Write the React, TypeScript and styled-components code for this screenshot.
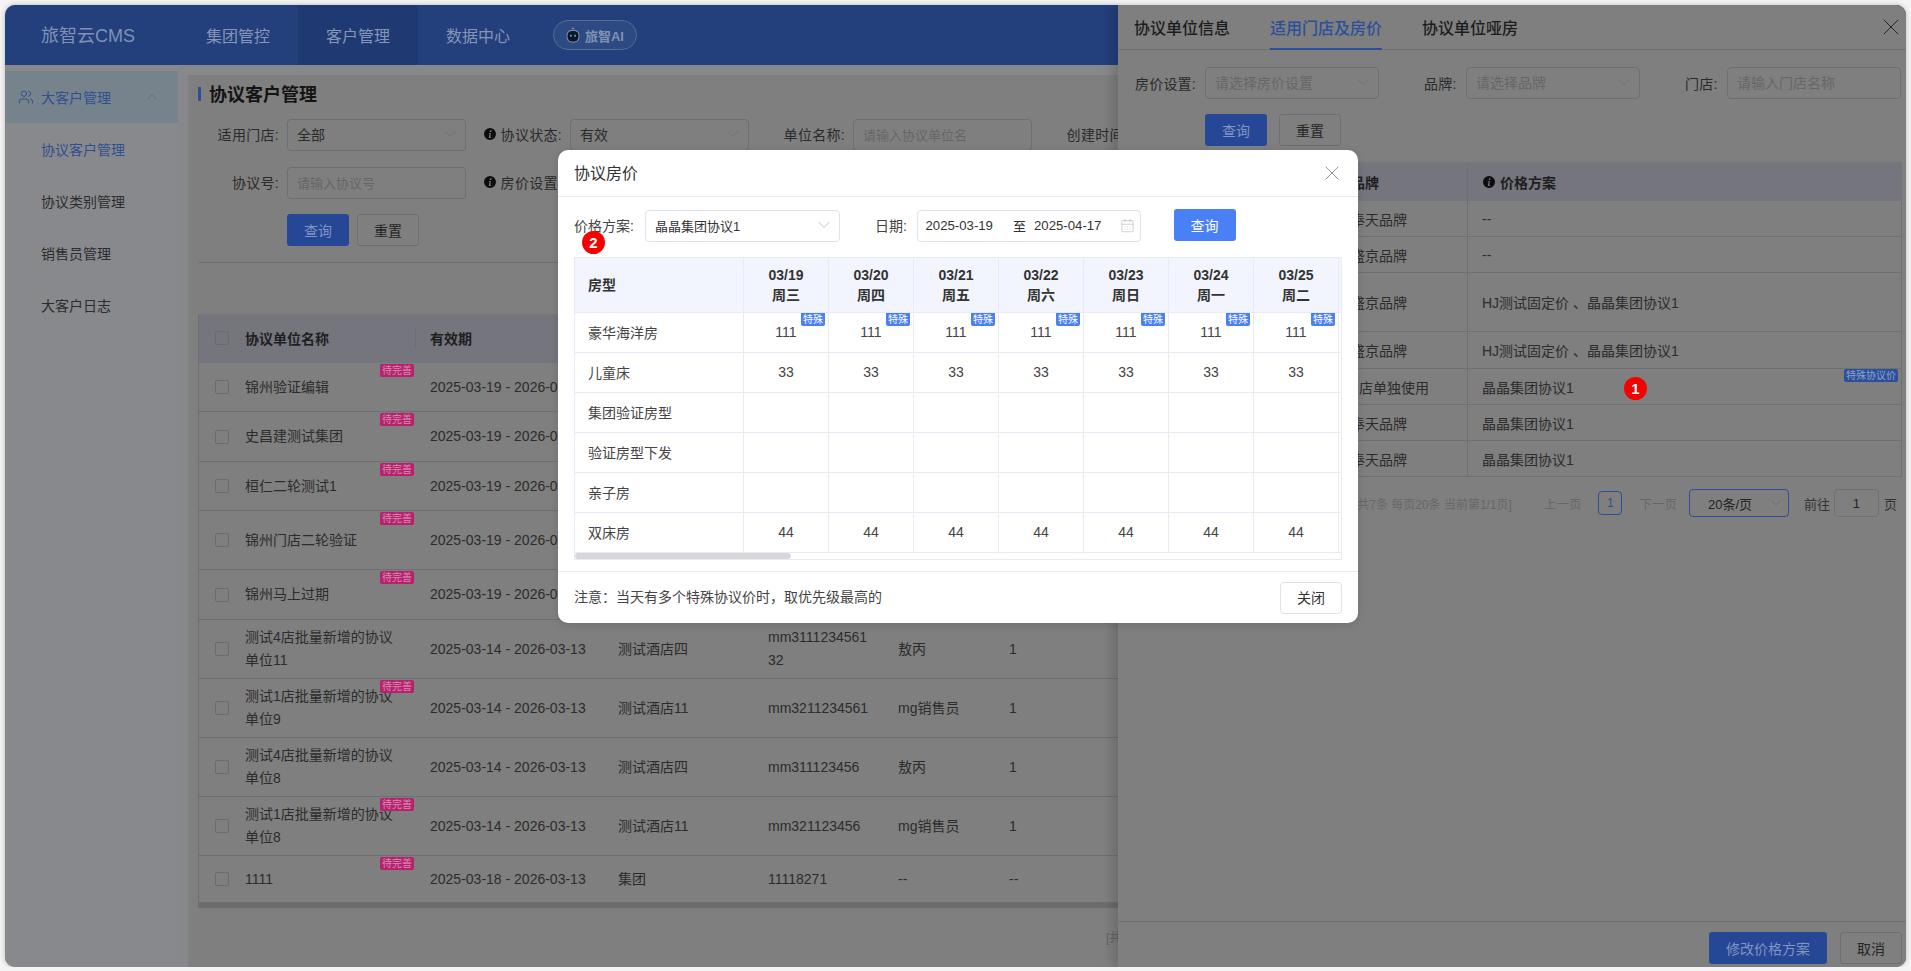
import React from 'react'
import styled, { createGlobalStyle } from 'styled-components'
import { CalendarDays, ChevronDown, ChevronUp, Users, X } from 'lucide-react'

const GlobalStyle = createGlobalStyle`
  html, body {
    margin: 0;
    background: #f4f4f4;
    font-family: "Liberation Sans", "Noto Sans CJK SC", sans-serif;
    font-size: 14px;
    color: #333;
  }
  * {
    box-sizing: border-box;
  }
`

const infoPath = 'M6 0a6 6 0 1 1 0 12A6 6 0 0 1 6 0zm.7 2.2a1 1 0 0 0-1 1 .8.8 0 0 0 .9.8 1 1 0 0 0 1-1 .8.8 0 0 0-.9-.8zM6.9 5 4.9 5.300l-.1.4.5.1c.3.100.3.200.3.400l-.7 2.700c-.2.800.1 1.200.8 1.200.6 0 1.100-.3 1.500-.7l.1-.4c-.2.200-.5.300-.7.300-.3 0-.3-.2-.3-.4z'

const InfoIcon = () => (
  <svg width="12" height="12" viewBox="0 0 12 12" style={{ flexShrink: 0 }}>
    <path d={infoPath} fill="#0d0d0d" fillRule="evenodd" />
  </svg>
)

const RobotIcon = () => (
  <svg width="14" height="16" viewBox="0 0 14 16">
    <circle cx="7" cy="1.6" r="1" fill="#7f8fae" />
    <rect x="0.600" y="3" width="12.800" height="12.400" rx="5" fill="#7f8fae" />
    <rect x="1.600" y="4" width="10.800" height="10.400" rx="4.200" fill="#0d1522" />
    <rect x="4" y="7.500" width="1.800" height="2.400" rx="0.900" fill="#3f9fc0" />
    <rect x="8.200" y="7.500" width="1.800" height="2.400" rx="0.900" fill="#3f9fc0" />
  </svg>
)

interface CustomerRow {
  name: string
  period: string
  hotel: string
  code: string
  sales: string
  count: string
  pending: boolean
  height: number
}

// the right hand cells of these rows sit behind the modal
const covered = { hotel: '', code: '', sales: '', count: '', period: '2025-03-19 - 2026-03-13' }

const customers: CustomerRow[] = [
  { ...covered, name: '锦州验证编辑', pending: true, height: 49 },
  { ...covered, name: '史昌建测试集团', pending: true, height: 50 },
  { ...covered, name: '桓仁二轮测试1', pending: true, height: 49 },
  { ...covered, name: '锦州门店二轮验证', pending: true, height: 59 },
  { ...covered, name: '锦州马上过期', pending: true, height: 50 },
  { name: '测试4店批量新增的协议单位11', period: '2025-03-14 - 2026-03-13', hotel: '测试酒店四', code: 'mm311123456132', sales: '敖丙', count: '1', pending: false, height: 59 },
  { name: '测试1店批量新增的协议单位9', period: '2025-03-14 - 2026-03-13', hotel: '测试酒店11', code: 'mm3211234561', sales: 'mg销售员', count: '1', pending: true, height: 59 },
  { name: '测试4店批量新增的协议单位8', period: '2025-03-14 - 2026-03-13', hotel: '测试酒店四', code: 'mm311123456', sales: '敖丙', count: '1', pending: false, height: 59 },
  { name: '测试1店批量新增的协议单位8', period: '2025-03-14 - 2026-03-13', hotel: '测试酒店11', code: 'mm321123456', sales: 'mg销售员', count: '1', pending: true, height: 59 },
  { name: '1111', period: '2025-03-18 - 2026-03-13', hotel: '集团', code: '11118271', sales: '--', count: '--', pending: true, height: 47 }
]

const storeRows = [
  { brand: '奉天品牌', plan: '--', height: 36 },
  { brand: '盛京品牌', plan: '--', height: 36 },
  { brand: '盛京品牌', plan: 'HJ测试固定价 、晶晶集团协议1', height: 59 },
  { brand: '盛京品牌', plan: 'HJ测试固定价 、晶晶集团协议1', height: 37 },
  { brand: '门店单独使用', plan: '晶晶集团协议1', height: 36, special: true },
  { brand: '奉天品牌', plan: '晶晶集团协议1', height: 36 },
  { brand: '奉天品牌', plan: '晶晶集团协议1', height: 36 }
]

const days = [
  ['03/19', '周三'],
  ['03/20', '周四'],
  ['03/21', '周五'],
  ['03/22', '周六'],
  ['03/23', '周日'],
  ['03/24', '周一'],
  ['03/25', '周二']
]

const roomRows = [
  { room: '豪华海洋房', price: '111', special: true },
  { room: '儿童床', price: '33' },
  { room: '集团验证房型', price: '' },
  { room: '验证房型下发', price: '' },
  { room: '亲子房', price: '' },
  { room: '双床房', price: '44' }
]

const App: React.FC = () => {
  return (
    <>
      <GlobalStyle />
      <AppWindow>
        <TopBar>
          <Logo>旅智云CMS</Logo>
          <NavItem>集团管控</NavItem>
          <NavItem $active>客户管理</NavItem>
          <NavItem>数据中心</NavItem>
          <AiPill>
            <RobotIcon />
            旅智AI
          </AiPill>
        </TopBar>
        <Body>
          <Sidebar>
            <SideGroup>
              <Users size={16} strokeWidth={1.5} />
              <span>大客户管理</span>
              <ChevronUp size={18} strokeWidth={1} />
            </SideGroup>
            <SideItem $active>协议客户管理</SideItem>
            <SideItem>协议类别管理</SideItem>
            <SideItem>销售员管理</SideItem>
            <SideItem>大客户日志</SideItem>
          </Sidebar>
          <Card>
            <PageTitle>协议客户管理</PageTitle>
            <FilterRow>
              <FilterItem>
                <FilterLabel>适用门店:</FilterLabel>
                <SelectBox>
                  全部
                  <ChevronDown size={20} strokeWidth={0.9} />
                </SelectBox>
              </FilterItem>
              <FilterItem>
                <FilterLabel $narrow>
                  <InfoIcon />
                  协议状态:
                </FilterLabel>
                <SelectBox>
                  有效
                  <ChevronDown size={20} strokeWidth={0.9} />
                </SelectBox>
              </FilterItem>
              <FilterItem>
                <FilterLabel $narrow>单位名称:</FilterLabel>
                <TextInput placeholder="请输入协议单位名" />
              </FilterItem>
              <FilterItem>
                <FilterLabel $narrow>创建时间:</FilterLabel>
                <TextInput />
              </FilterItem>
            </FilterRow>
            <FilterRow>
              <FilterItem>
                <FilterLabel>协议号:</FilterLabel>
                <TextInput placeholder="请输入协议号" />
              </FilterItem>
              <FilterItem>
                <FilterLabel $narrow>
                  <InfoIcon />
                  房价设置:
                </FilterLabel>
                <SelectBox />
              </FilterItem>
            </FilterRow>
            <ButtonRow>
              <PrimaryButton>查询</PrimaryButton>
              <GhostButton>重置</GhostButton>
            </ButtonRow>
            <Divider />
            <CustomerTable>
              <CustomerHead>
                <CheckBox />
                <HeadName>协议单位名称</HeadName>
                <span>有效期</span>
              </CustomerHead>
              {customers.map(row => (
                <CustomerLine key={row.name + row.height} $height={row.height}>
                  <CheckBox />
                  <NameCell>{row.name}</NameCell>
                  <span>{row.period}</span>
                  <span>{row.hotel}</span>
                  <CodeCell>{row.code}</CodeCell>
                  <span>{row.sales}</span>
                  <span>{row.count}</span>
                  {row.pending && <PendingTag>待完善</PendingTag>}
                </CustomerLine>
              ))}
              <TableScroll />
            </CustomerTable>
            <TotalLine>[共10条 每页20条 当前第1/1页]</TotalLine>
          </Card>
        </Body>

        <Drawer>
          <DrawerTabs>
            <DrawerTab>协议单位信息</DrawerTab>
            <DrawerTab $active>适用门店及房价</DrawerTab>
            <DrawerTab>协议单位哑房</DrawerTab>
            <DrawerClose>
              <X size={28} strokeWidth={0.85} />
            </DrawerClose>
          </DrawerTabs>
          <DrawerFilters>
            <DrawerField $labelWidth={62}>
              房价设置:
              <DrawerSelect>
                请选择房价设置
                <ChevronDown size={20} strokeWidth={0.9} />
              </DrawerSelect>
            </DrawerField>
            <DrawerField $labelWidth={34}>
              品牌:
              <DrawerSelect>
                请选择品牌
                <ChevronDown size={20} strokeWidth={0.9} />
              </DrawerSelect>
            </DrawerField>
            <DrawerField $labelWidth={34}>
              门店:
              <DrawerInput placeholder="请输入门店名称" />
            </DrawerField>
          </DrawerFilters>
          <DrawerButtons>
            <PrimaryButton>查询</PrimaryButton>
            <GhostButton>重置</GhostButton>
          </DrawerButtons>
          <StoreTable>
            <StoreHead>
              <span />
              <BrandCell>品牌</BrandCell>
              <PlanHead>
                <InfoIcon />
                价格方案
              </PlanHead>
            </StoreHead>
            {storeRows.map((row, i) => (
              <StoreLine key={i} $height={row.height}>
                <span />
                <BrandCell $shift={row.special}>{row.brand}</BrandCell>
                <PlanCell>{row.plan}</PlanCell>
                {row.special && <SpecialPlanTag>特殊协议价</SpecialPlanTag>}
              </StoreLine>
            ))}
          </StoreTable>
          <Pager>
            <PagerTotal>[共7条 每页20条 当前第1/1页]</PagerTotal>
            <PagerLink>上一页</PagerLink>
            <PagerCurrent>1</PagerCurrent>
            <PagerLink>下一页</PagerLink>
            <PagerSize>
              20条/页
              <ChevronDown size={16} strokeWidth={1} />
            </PagerSize>
            <PagerText>前往</PagerText>
            <PagerJump>1</PagerJump>
            <PagerText>页</PagerText>
          </Pager>
          <DrawerFooter>
            <PrimaryButton $wide>修改价格方案</PrimaryButton>
            <GhostButton>取消</GhostButton>
          </DrawerFooter>
          <Marker $left={506} $top={372}>1</Marker>
        </Drawer>

        <Modal>
          <ModalHeader>
            <ModalTitle>协议房价</ModalTitle>
            <X size={24} strokeWidth={0.9} />
          </ModalHeader>
          <ModalFilters>
            <ModalLabel>价格方案:</ModalLabel>
            <ModalSelect>
              晶晶集团协议1
              <ChevronDown size={20} strokeWidth={0.9} />
            </ModalSelect>
            <ModalLabel $dateLabel>日期:</ModalLabel>
            <DateRange>
              <span>2025-03-19</span>
              <DateSeparator>至</DateSeparator>
              <span>2025-04-17</span>
              <CalendarDays size={15} strokeWidth={1} />
            </DateRange>
            <QueryButton>查询</QueryButton>
          </ModalFilters>
          <PriceTable>
            <PriceHead>
              <RoomCell>房型</RoomCell>
              {days.map(([date, week]) => (
                <DayCell key={date}>
                  <span>{date}</span>
                  <span>{week}</span>
                </DayCell>
              ))}
              <div />
            </PriceHead>
            {roomRows.map(row => (
              <PriceLine key={row.room}>
                <RoomCell>{row.room}</RoomCell>
                {days.map(([date]) => (
                  <PriceCell key={date}>
                    {row.price}
                    {row.special && <SpecialTag>特殊</SpecialTag>}
                  </PriceCell>
                ))}
                <div />
              </PriceLine>
            ))}
            <ScrollTrack>
              <ScrollThumb />
            </ScrollTrack>
          </PriceTable>
          <ModalFooter>
            {'注意\uFF1A当天有多个特殊协议价时\uFF0C取优先级最高的'}
            <CloseButton>关闭</CloseButton>
          </ModalFooter>
          <Marker $left={24} $top={81}>2</Marker>
        </Modal>
      </AppWindow>
    </>
  )
}

export default App

const AppWindow = styled.div`
  position: relative;
  width: 1901px;
  height: 962px;
  margin: 5px 0 0 5px;
  border-radius: 10px;
  overflow: hidden;
  background: #87888b;
  box-shadow: 0 0 5px rgba(0, 0, 0, 0.25);
  display: flex;
  flex-direction: column;
`

const TopBar = styled.header`
  height: 60px;
  flex-shrink: 0;
  background: #233f7c;
  display: flex;
  align-items: center;
  color: #8596b8;
`

const Logo = styled.div`
  width: 173px;
  padding: 0 0 2px 36px;
  font-size: 18px;
  color: #7f92b6;
`

const NavItem = styled.div<{ $active?: boolean }>`
  width: 120px;
  height: 100%;
  display: flex;
  align-items: center;
  justify-content: center;
  font-size: 16px;
  background: ${p => (p.$active ? '#1f3a72' : 'transparent')};
`

const AiPill = styled.div`
  width: 84px;
  height: 30px;
  margin-left: 15px;
  border-radius: 15px;
  border: 1px solid #566c97;
  background: #2e4a83;
  display: flex;
  align-items: center;
  justify-content: center;
  gap: 5px;
  font-size: 13px;
  font-weight: bold;
  color: #8092b4;
`

const Body = styled.div`
  flex: 1;
  min-height: 0;
  display: flex;
`

const Sidebar = styled.aside`
  width: 173px;
  flex-shrink: 0;
  padding-top: 6px;
  margin-right: 10px;
  background: #88898c;
  color: #2c2c2c;
`

const SideGroup = styled.div`
  height: 52px;
  padding: 0 17px 0 13px;
  display: flex;
  align-items: center;
  background: #77838c;
  color: #2e508f;

  span {
    margin-left: 7px;
    flex: 1;
  }

  svg:last-child {
    color: #5a6b82;
  }
`

const SideItem = styled.div<{ $active?: boolean }>`
  height: 52px;
  padding-left: 36px;
  display: flex;
  align-items: center;
  color: ${p => (p.$active ? '#2e508f' : '#2c2c2c')};
`

const Card = styled.main`
  flex: 1;
  min-width: 0;
  margin-top: 10px;
  padding: 8px 0 0 10px;
  background: #7f7f7f;
  overflow: hidden;
`

const PageTitle = styled.h1`
  margin: 0 0 12px;
  height: 24px;
  padding-left: 11px;
  position: relative;
  font-size: 18px;
  line-height: 24px;
  font-weight: bold;
  color: #141414;

  &::before {
    content: '';
    position: absolute;
    left: 0;
    top: 4px;
    width: 3px;
    height: 14px;
    background: #2b4f9b;
  }
`

const FilterRow = styled.div`
  display: flex;
  gap: 18px;
  margin-bottom: 16px;
`

const FilterItem = styled.div`
  display: flex;
  align-items: center;
  gap: 8px;
  flex-shrink: 0;
`

const FilterLabel = styled.label<{ $narrow?: boolean }>`
  width: ${p => (p.$narrow ? 78 : 81)}px;
  padding-bottom: 2px;
  display: flex;
  align-items: center;
  justify-content: flex-end;
  gap: 5px;
  letter-spacing: 0.3px;
  color: #2a2a2a;
  white-space: nowrap;
`

const SelectBox = styled.div`
  width: 179px;
  height: 32px;
  padding: 0 5px 2px 9px;
  border: 1px solid #6c6e76;
  border-radius: 4px;
  display: flex;
  align-items: center;
  justify-content: space-between;
  color: #2a2a2a;

  svg {
    color: #6a6c72;
    margin-left: auto;
  }
`

const TextInput = styled.input`
  width: 179px;
  height: 32px;
  padding: 0 9px;
  border: 1px solid #6c6e76;
  border-radius: 4px;
  background: transparent;
  font: inherit;
  font-size: 13px;
  outline: none;

  &::placeholder {
    color: #666;
  }
`

const ButtonRow = styled.div`
  display: flex;
  gap: 8px;
  margin: -1px 0 0 89px;
`

const PrimaryButton = styled.button<{ $wide?: boolean }>`
  width: ${p => (p.$wide ? 118 : 62)}px;
  height: 32px;
  padding: 0;
  border: none;
  border-radius: 3px;
  background: #254795;
  color: #8195c1;
  font: inherit;
`

const GhostButton = styled.button`
  width: 62px;
  height: 32px;
  padding: 0;
  border: 1px solid #6c6e76;
  border-radius: 3px;
  background: transparent;
  color: #262626;
  font: inherit;
`

const Divider = styled.div`
  height: 1px;
  margin-top: 16px;
  background: #6c6e74;
`

const CustomerTable = styled.div`
  margin-top: 51px;
  width: 1100px;
  border-left: 1px solid #6e6f75;
`

const customerColumns = '46px 185px 188px 150px 130px 111px 1fr'

const CustomerHead = styled.div`
  height: 49px;
  padding-bottom: 2px;
  display: grid;
  grid-template-columns: ${customerColumns};
  align-items: center;
  background: #74757d;
  font-weight: bold;
  color: #1f1f1f;
`

const CheckBox = styled.i`
  display: block;
  width: 14px;
  height: 14px;
  margin-left: 16px;
  border: 1px solid #6b6b6b;
  border-radius: 2px;
`

const HeadName = styled.span`
  display: block;
  width: 171px;
  border-right: 1px solid #6b6c74;
`

const CustomerLine = styled.div<{ $height: number }>`
  position: relative;
  height: ${p => p.$height}px;
  display: grid;
  grid-template-columns: ${customerColumns};
  align-items: center;
  border-bottom: 1px solid #6e6f75;
  color: #2c2c2c;
  line-height: 23px;
  white-space: nowrap;
`

const NameCell = styled.span`
  max-width: 156px;
  white-space: normal;
`

const CodeCell = styled.span`
  width: 104px;
  white-space: normal;
  word-break: break-all;
`

const PendingTag = styled.em`
  position: absolute;
  left: 181px;
  top: 1px;
  width: 34px;
  height: 13px;
  border-radius: 2px;
  background: #b5236d;
  color: #d98ab4;
  font-size: 10px;
  font-style: normal;
  line-height: 13px;
  text-align: center;
`

const TableScroll = styled.div`
  height: 5px;
  background: #6c6c6c;
`

const TotalLine = styled.div`
  margin: 20px 0 0 908px;
  font-size: 12px;
  color: #626262;
  white-space: nowrap;
`

const Drawer = styled.aside`
  position: absolute;
  top: 0;
  right: 0;
  bottom: 0;
  width: 788px;
  background: #7f7f7f;
  box-shadow: -6px 0 10px rgba(0, 0, 0, 0.15);
  display: flex;
  flex-direction: column;
`

const DrawerTabs = styled.div`
  height: 45px;
  flex-shrink: 0;
  padding-left: 16px;
  display: flex;
  gap: 40px;
  border-bottom: 1px solid #6f7074;
`

const DrawerTab = styled.div<{ $active?: boolean }>`
  height: 45px;
  display: flex;
  align-items: center;
  font-size: 16px;
  font-weight: 500;
  border-bottom: 2px solid ${p => (p.$active ? '#2b4f9b' : 'transparent')};
  color: ${p => (p.$active ? '#2b4f9b' : '#1c1c1c')};
`

const DrawerClose = styled.div`
  margin-left: auto;
  padding-right: 1px;
  display: flex;
  align-items: center;
  color: #262626;
`

const DrawerFilters = styled.div`
  display: flex;
  gap: 45px;
  margin-top: 17px;
  padding-left: 17px;
`

const DrawerField = styled.label<{ $labelWidth: number }>`
  display: grid;
  grid-template-columns: ${p => p.$labelWidth}px 174px;
  column-gap: 8px;
  align-items: center;
  letter-spacing: 0.2px;
  color: #2a2a2a;
  white-space: nowrap;
`

const DrawerSelect = styled.div`
  height: 32px;
  padding: 0 5px 2px 9px;
  border: 1px solid #6c6e76;
  border-radius: 4px;
  display: flex;
  align-items: center;
  justify-content: space-between;
  letter-spacing: 0;
  font-size: 14px;
  color: #666;

  svg {
    color: #6a6c72;
  }
`

const DrawerInput = styled.input`
  width: 174px;
  height: 32px;
  padding: 0 9px;
  border: 1px solid #6c6e76;
  border-radius: 4px;
  background: transparent;
  font: inherit;
  outline: none;

  &::placeholder {
    color: #666;
  }
`

const DrawerButtons = styled.div`
  display: flex;
  gap: 12px;
  margin: 15px 0 0 87px;
`

const StoreTable = styled.div`
  margin: 16px 4px 0 17px;
`

const storeColumns = '216px 116px 1fr'

const StoreHead = styled.div`
  height: 39px;
  display: grid;
  grid-template-columns: ${storeColumns};
  align-items: center;
  background: #74757d;
  font-weight: bold;
  color: #1f1f1f;
`

const PlanHead = styled.span`
  height: 100%;
  padding-left: 15px;
  display: flex;
  align-items: center;
  gap: 5px;
  border-left: 1px solid #6e6f77;
`

const StoreLine = styled.div<{ $height: number }>`
  position: relative;
  height: ${p => p.$height}px;
  display: grid;
  grid-template-columns: ${storeColumns};
  align-items: center;
  border-bottom: 1px solid #6e6f77;
  border-right: 1px solid #6e6f77;
  color: #2c2c2c;
`

const BrandCell = styled.span<{ $shift?: boolean }>`
  margin-left: ${p => (p.$shift ? -6 : 0)}px;
  white-space: nowrap;
`

const PlanCell = styled.span`
  height: 100%;
  padding-left: 14px;
  display: flex;
  align-items: center;
  border-left: 1px solid #6e6f77;
`

const SpecialPlanTag = styled.em`
  position: absolute;
  right: 3px;
  top: 0;
  width: 54px;
  height: 13px;
  border-radius: 2px;
  background: #2b4f9b;
  color: #8ea2cc;
  font-size: 10px;
  font-style: normal;
  line-height: 13px;
  text-align: center;
`

const Pager = styled.div`
  margin-top: 12px;
  height: 28px;
  padding-right: 9px;
  display: flex;
  align-items: center;
  justify-content: flex-end;
  font-size: 12px;
  color: #676767;
  white-space: nowrap;
`

const PagerTotal = styled.span`
  margin-right: 32px;
`

const PagerLink = styled.span`
  font-size: 12.5px;
`

const PagerCurrent = styled.span`
  width: 24px;
  height: 24px;
  margin: 0 17px;
  border: 1px solid #2b4f9b;
  border-radius: 4px;
  display: flex;
  align-items: center;
  justify-content: center;
  color: #2b4f9b;
`

const PagerSize = styled.div`
  width: 100px;
  height: 28px;
  margin: 0 15px 0 12px;
  padding: 0 4px 0 18px;
  border: 1px solid #2b4f9b;
  border-radius: 4px;
  display: flex;
  align-items: center;
  justify-content: space-between;
  font-size: 13px;
  color: #222;

  svg {
    color: #666;
  }
`

const PagerText = styled.span`
  font-size: 13px;
  color: #333;
`

const PagerJump = styled.div`
  width: 45px;
  height: 28px;
  margin: 0 5px 0 4px;
  border: 1px solid #6f7074;
  border-radius: 4px;
  display: flex;
  align-items: center;
  justify-content: center;
  font-size: 13px;
  color: #222;
`

const DrawerFooter = styled.div`
  margin-top: auto;
  height: 46px;
  padding: 10px 4px 0 0;
  display: flex;
  justify-content: flex-end;
  gap: 13px;
  border-top: 1px solid #6f7074;
`

const Marker = styled.b<{ $left: number; $top: number }>`
  position: absolute;
  left: ${p => p.$left}px;
  top: ${p => p.$top}px;
  width: 23px;
  height: 23px;
  border-radius: 50%;
  background: #f60000;
  color: #fff;
  font-size: 15px;
  line-height: 23px;
  text-align: center;
`

const Modal = styled.section`
  position: absolute;
  left: 553px;
  top: 145px;
  width: 800px;
  height: 473px;
  padding: 0 16px;
  border-radius: 10px;
  background: #fff;
  box-shadow: 0 2px 10px rgba(0, 0, 0, 0.12);
  display: flex;
  flex-direction: column;
`

const ModalHeader = styled.header`
  height: 47px;
  flex-shrink: 0;
  margin: 0 -16px;
  padding: 0 14px 0 16px;
  display: flex;
  align-items: center;
  justify-content: space-between;
  border-bottom: 1px solid #e8ebf5;
  font-size: 16px;
  color: #333;

  svg {
    color: #8b8b8b;
  }
`

const ModalTitle = styled.span`
  padding-bottom: 2px;
`

const ModalFilters = styled.div`
  margin-top: 13px;
  height: 32px;
  flex-shrink: 0;
  display: flex;
  align-items: center;
`

const ModalLabel = styled.label<{ $dateLabel?: boolean }>`
  width: ${p => (p.$dateLabel ? 41.5 : 71)}px;
  margin-left: ${p => (p.$dateLabel ? 35 : 0)}px;
  padding-bottom: 2px;
  color: #444;
  white-space: nowrap;
`

const ModalSelect = styled.div`
  width: 195px;
  height: 32px;
  padding: 0 5px 2px 9px;
  border: 1px solid #dfe2ea;
  border-radius: 4px;
  display: flex;
  align-items: center;
  justify-content: space-between;
  font-size: 13px;
  color: #333;

  svg {
    color: #b5b7bd;
  }
`

const DateRange = styled.div`
  width: 224px;
  height: 32px;
  padding: 0 5px 2px 8px;
  border: 1px solid #dfe2ea;
  border-radius: 4px;
  display: flex;
  align-items: center;
  font-size: 13.2px;
  color: #333;

  svg {
    margin-left: auto;
    color: #b5b7bd;
  }
`

const DateSeparator = styled.span`
  margin: 0 8px 0 20px;
  font-size: 13px;
`

const QueryButton = styled.button`
  width: 62px;
  height: 32px;
  margin: -2px 0 0 33px;
  padding: 0;
  border: none;
  border-radius: 3px;
  background: #4a80f5;
  color: #fff;
  font: inherit;
`

const PriceTable = styled.div`
  margin-top: 15px;
  border: 1px solid #e8ebf7;
`

const priceColumns = '169px repeat(7, 85px) 1fr'

const PriceHead = styled.div`
  height: 55px;
  display: grid;
  grid-template-columns: ${priceColumns};
  background: #f2f5fd;
  border-bottom: 1px solid #e8ebf7;
  font-weight: bold;
  font-size: 14px;
  color: #333;
`

const PriceLine = styled.div`
  height: 40px;
  display: grid;
  grid-template-columns: ${priceColumns};
  border-bottom: 1px solid #e8ebf7;
  color: #444;
`

const RoomCell = styled.div`
  padding: 0 0 2px 13px;
  display: flex;
  align-items: center;
  border-right: 1px solid #e8ebf7;
`

const DayCell = styled.div`
  display: flex;
  flex-direction: column;
  justify-content: center;
  text-align: center;
  line-height: 20px;
  padding-bottom: 1px;
  border-right: 1px solid #e8ebf7;
`

const PriceCell = styled.div`
  position: relative;
  padding-bottom: 2px;
  display: flex;
  align-items: center;
  justify-content: center;
  border-right: 1px solid #e8ebf7;
`

const SpecialTag = styled.em`
  position: absolute;
  right: 3px;
  top: 0;
  width: 24px;
  height: 13px;
  border-radius: 0 0 2px 2px;
  background: #4a80f5;
  color: #fff;
  font-size: 10px;
  font-style: normal;
  line-height: 13px;
  text-align: center;
`

const ScrollTrack = styled.div`
  height: 6px;
`

const ScrollThumb = styled.div`
  width: 216px;
  height: 6px;
  border-radius: 3px;
  background: #d8d8d8;
`

const ModalFooter = styled.footer`
  margin: 11px -16px 0;
  padding: 10px 16px 0;
  height: 53px;
  flex-shrink: 0;
  display: flex;
  align-items: flex-start;
  justify-content: space-between;
  border-top: 1px solid #e8ebf7;
  line-height: 30px;
  font-size: 14px;
  color: #444;
`

const CloseButton = styled.button`
  width: 62px;
  height: 32px;
  padding: 0;
  border: 1px solid #dfe2ea;
  border-radius: 4px;
  background: #fff;
  color: #333;
  font: inherit;
  font-size: 14px;
`
